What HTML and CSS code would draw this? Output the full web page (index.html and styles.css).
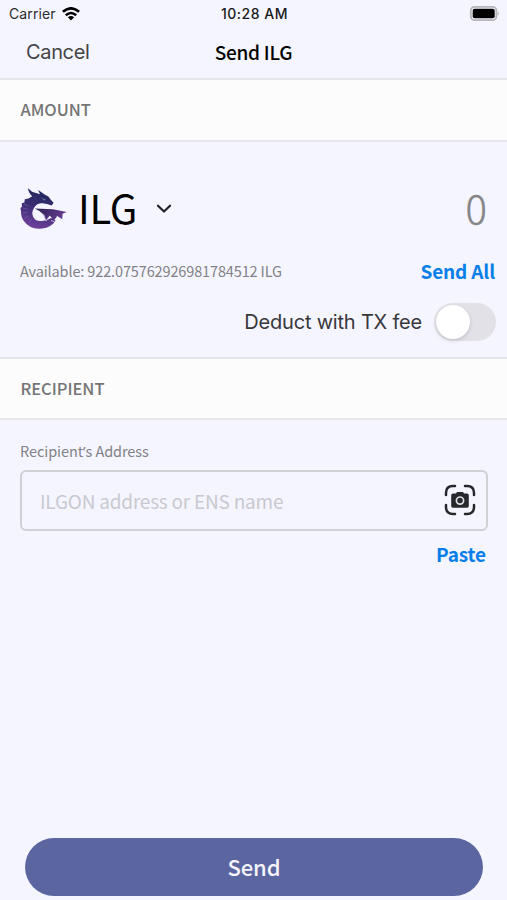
FILE: index.html
```html
<!DOCTYPE html>
<html lang="en">
<head>
    <meta charset="UTF-8">
    <meta name="viewport" content="width=device-width, initial-scale=1.0">
    <title>Send ILG</title>
    <link rel="stylesheet" href="styles.css">
</head>
<body>
    <div class="screen">
        <div class="status-bar">
            <div class="carrier">
                <span class="carrier-name">Carrier</span>
                <svg class="wifi" width="18" height="14" viewBox="0 0 18 14">
                    <path d="M0.9 4.8Q9-2.1 17.1 4.8" fill="none" stroke="#000" stroke-width="2.7"/>
                    <path d="M3.8 8.2Q9 3.7 14.2 8.2" fill="none" stroke="#000" stroke-width="2.5"/>
                    <path d="M9 13.4L5.9 10.2Q9 7.7 12.1 10.2Z"/>
                </svg>
            </div>
            <span class="time">10:28 AM</span>
            <svg class="battery" width="31" height="16" viewBox="0 0 31 16">
                <rect x="1.8" y="0.8" width="25.6" height="13.4" rx="4" fill="#f5f5ff" stroke="#b4b4b9" stroke-width="1.8"/>
                <rect x="3.7" y="2.7" width="22" height="9.6" rx="2"/>
                <path d="M28.8 5.2Q30.8 7.5 28.8 9.8Z" fill="#acacb1"/>
            </svg>
        </div>

        <div class="nav">
            <span class="cancel">Cancel</span>
            <span class="title">Send ILG</span>
        </div>

        <div class="section-header"><span class="amount-label">AMOUNT</span></div>
        <div class="amount">
            <div class="token-row">
                <svg class="logo" width="48" height="42" viewBox="0 0 48 42">
                    <defs>
                        <linearGradient id="dragon" x1="0.6" y1="0" x2="0.35" y2="1">
                            <stop offset="0" stop-color="#1c2858"/>
                            <stop offset="0.45" stop-color="#3a2c72"/>
                            <stop offset="1" stop-color="#70429e"/>
                        </linearGradient>
                        <linearGradient id="wing" x1="0" y1="0" x2="1" y2="0.3">
                            <stop offset="0" stop-color="#292451"/>
                            <stop offset="1" stop-color="#683b91"/>
                        </linearGradient>
                    </defs>
                    <path d="M7.8 0L12 3.8L20 6.2L18.2 2L25 6.8Q29 8 30.6 11.6L33.6 14.8L31.8 17.4L27 16L22.4 15.2Q17.7 15 15 18.5Q11 23.5 13 28.5Q15.6 33.7 21.4 33Q26.5 33.2 31 30Q34 31 35.6 32.8Q31 39.6 22.4 40.5Q10 42 4 33.3Q0.8 29 1 23L0.4 20.2L2 18.5L1.8 15.3L4.4 14.6L4.8 11.2L8.5 10.5L12.2 8.2Q9 5.8 7.8 0Z" fill="url(#dragon)"/>
                    <path d="M14.8 20.5L33 21.2L46.8 24L42.6 25.8L42.2 31.2L37.2 28L33.8 32.8L29.8 27.5L26 33.6L23.4 26.5Q20.6 23 14.8 20.5Z" fill="url(#wing)"/>
                    <path d="M23.8 26.5L26 33L29 28.6M31 32.6L35.4 34" fill="none" stroke="#d8cef0" stroke-width="0.8"/>
                    <path d="M21 9.8L25.8 11.7L24.6 12.4Z" fill="#7993bd"/>
                    <path d="M2.6 20L7.4 21M4 15.8L8.2 18M2.5 25L7.4 24.4M4.4 30.5L8.5 28M8.8 35L11.7 31.2" fill="none" stroke="#7665aa" stroke-width="0.6"/>
                </svg>
                <span class="token">ILG</span>
                <svg class="chevron" width="16" height="10" viewBox="0 0 16 10">
                    <path d="M2 1.7L8 7.5L14 1.7" fill="none" stroke="#222226" stroke-width="2.2" stroke-linecap="round" stroke-linejoin="round"/>
                </svg>
                <span class="value">0</span>
            </div>
            <div class="available-row">
                <span class="available">Available: 922.075762926981784512 ILG</span>
                <span class="link send-all">Send All</span>
            </div>
            <div class="fee-row">
                <span class="fee-label">Deduct with TX fee</span>
                <span class="toggle"><span class="knob"></span></span>
            </div>
        </div>

        <div class="section-header recipient-header"><span class="recipient-label">RECIPIENT</span></div>
        <div class="recipient">
            <div class="field-label">Recipient<span class="apostrophe">’</span>s Address</div>
            <div class="field">
                <span class="placeholder">ILGON address or ENS name</span>
                <svg class="scan" width="32" height="32" viewBox="0 0 32 32">
                    <path d="M2 11V9Q2 2 9 2H11M21 2H23Q30 2 30 9V11M30 21V23Q30 30 23 30H21M11 30H9Q2 30 2 23V21" fill="none" stroke="#26282c" stroke-width="2.5" stroke-linecap="round"/>
                    <path d="M9 9.6H12L13 8H19L20 9.6H23Q24.8 9.6 24.8 11.4V22Q24.8 23.8 23 23.8H9Q7.2 23.8 7.2 22V11.4Q7.2 9.6 9 9.6Z" fill="#26282c"/>
                    <circle cx="16" cy="16.6" r="3.6" fill="#26282c" stroke="#dedee6" stroke-width="1.7"/>
                </svg>
            </div>
            <div class="link paste">Paste</div>
        </div>

        <div class="footer">
            <div class="send-btn"><span>Send</span></div>
        </div>
    </div>
</body>
</html>
```
FILE: styles.css
```css
* {
    box-sizing: border-box;
}
body {
    margin: 0;
    background-color: #f5f5ff;
    color: #000;
    font-family: "Noto Sans CJK SC", sans-serif;
    white-space: nowrap;
}
.screen {
    height: 900px;
    display: flex;
    flex-direction: column;
    overflow: hidden;
}
.status-bar {
    height: 27px;
    padding: 0 7px 0 9px;
    display: grid;
    grid-template-columns: 1fr auto 1fr;
    align-items: center;
    font-family: Inter, sans-serif;
    font-size: 14px;
    line-height: 27px;
}
.carrier {
    display: flex;
    align-items: center;
    gap: 6px;
    color: #2b2b2e;
}
.carrier-name {
    letter-spacing: 0.1px;
}
.time {
    font-weight: 500;
    letter-spacing: 0.5px;
    color: #18181a;
}
.battery {
    justify-self: end;
}
.nav {
    height: 51px;
    padding: 0 25px;
    display: grid;
    grid-template-columns: 1fr auto 1fr;
    line-height: 50px;
}
.cancel {
    padding-left: 1px;
    font-family: Inter, sans-serif;
    font-size: 20px;
    line-height: 51px;
    letter-spacing: -0.35px;
    color: #444448;
}
.title {
    font-size: 19px;
    font-weight: 500;
    letter-spacing: -0.25px;
}
.section-header {
    height: 64px;
    border-top: 2px solid #e6e6ec;
    border-bottom: 2px solid #e6e6ec;
    background-color: #fcfcfc;
    padding-left: 20.5px;
    font-size: 16.5px;
    font-weight: 500;
    line-height: 59px;
    letter-spacing: -0.05px;
    color: #757575;
}
.recipient-header {
    height: 63px;
}
.amount {
    height: 215px;
    padding: 35px 11px 0 20px;
}
.token-row {
    height: 60px;
    display: flex;
    align-items: center;
    font-size: 40px;
    line-height: 60px;
}
.logo {
    margin-top: 4px;
}
.token {
    margin-left: 10px;
    letter-spacing: -0.3px;
}
.chevron {
    margin: 4px 0 0 19px;
}
.value {
    margin: 0 9px 0 auto;
    font-weight: 300;
    color: #858588;
    -webkit-text-stroke: 0.4px #858588;
}
.available-row {
    height: 30px;
    margin-top: 19px;
    padding-right: 1px;
    display: flex;
    justify-content: space-between;
    line-height: 29px;
}
.available {
    font-size: 14.5px;
    letter-spacing: -0.13px;
    color: #828286;
}
.link {
    font-size: 19px;
    font-weight: 700;
    letter-spacing: -0.15px;
    color: #087fe8;
}
.fee-row {
    height: 38px;
    margin-top: 17px;
    display: flex;
    justify-content: flex-end;
    gap: 12px;
    font-family: Inter, sans-serif;
    font-size: 20px;
    line-height: 38px;
    letter-spacing: -0.2px;
    color: #37373b;
}
.toggle {
    width: 62px;
    height: 38px;
    padding: 2px;
    border-radius: 19px;
    background-color: #e1e1e7;
}
.knob {
    display: block;
    width: 34px;
    height: 34px;
    border-radius: 50%;
    background-color: #fff;
    box-shadow: 0 2px 4px rgba(0, 0, 0, 0.13);
}
.recipient {
    padding: 16px 19px 0 20px;
}
.field-label {
    height: 34px;
    font-size: 14.5px;
    line-height: 30px;
    letter-spacing: -0.08px;
    color: #828286;
}
.apostrophe {
    font-family: "Noto Sans", sans-serif;
    line-height: 1;
}
.field {
    height: 61px;
    padding: 0 10px 0 18px;
    border: 2px solid #d0d0d6;
    border-radius: 6px;
    display: flex;
    align-items: center;
    justify-content: space-between;
}
.placeholder {
    font-size: 19px;
    line-height: 56px;
    letter-spacing: -0.21px;
    color: #c9c9d0;
}
.scan {
    margin-top: -1px;
}
.paste {
    margin-top: 8px;
    padding-right: 2px;
    line-height: 30px;
    text-align: right;
}
.footer {
    margin-top: auto;
    padding: 0 24px 4px 25px;
}
.send-btn {
    height: 58px;
    border-radius: 29px;
    background-color: #5b65a0;
    color: #f5f5ff;
    font-size: 22px;
    font-weight: 500;
    line-height: 57px;
    letter-spacing: -0.1px;
    text-align: center;
}
```
